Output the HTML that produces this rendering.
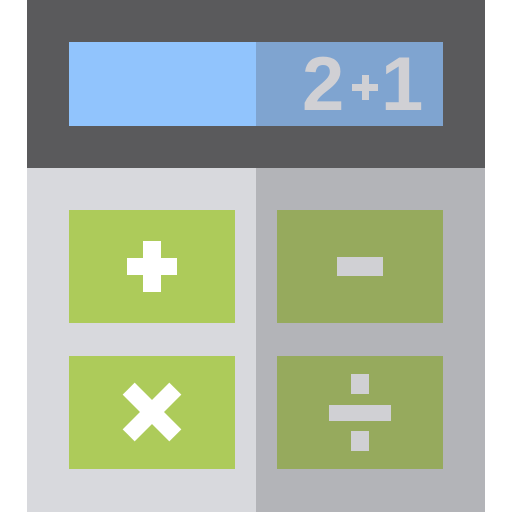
<!DOCTYPE html>
<html><head><meta charset="utf-8"><style>
html,body{margin:0;padding:0;background:#fff;width:512px;height:512px;overflow:hidden}
</style></head><body>
<svg width="512" height="512" viewBox="0 0 512 512" xmlns="http://www.w3.org/2000/svg">
<rect x="27" y="0" width="458" height="168" fill="#5a5a5c"/>
<rect x="27" y="168" width="229" height="344" fill="#d8d9dd"/>
<rect x="256" y="168" width="229" height="344" fill="#b3b4b8"/>
<rect x="69" y="42" width="187" height="84" fill="#91c4fd"/>
<rect x="256" y="42" width="187" height="84" fill="#7fa4d0"/>
<g font-family="Liberation Sans, sans-serif" font-weight="bold" fill="#d0d0d4">
<text x="302" y="110" font-size="76">2</text>
<text x="381" y="110" font-size="76">1</text>
</g>
<rect x="352" y="84" width="26" height="7" fill="#d0d0d4"/>
<rect x="362" y="75" width="7" height="25" fill="#d0d0d4"/>
<rect x="69" y="210" width="166" height="113" fill="#adcb5a"/>
<rect x="277" y="210" width="166" height="113" fill="#96aa5d"/>
<rect x="69" y="356" width="166" height="113" fill="#adcb5a"/>
<rect x="277" y="356" width="166" height="113" fill="#96aa5d"/>
<rect x="127" y="258" width="50" height="17" fill="#fff"/>
<rect x="143" y="241" width="18" height="51" fill="#fff"/>
<rect x="337" y="257" width="46" height="19" fill="#d0d0d4"/>
<rect x="351" y="374" width="18" height="20" fill="#d0d0d4"/>
<rect x="329" y="405" width="62" height="16" fill="#d0d0d4"/>
<rect x="351" y="431" width="18" height="20" fill="#d0d0d4"/>
<g transform="translate(152,412) rotate(45)" fill="#fff">
<rect x="-33" y="-8.5" width="66" height="17"/>
<rect x="-8.5" y="-33" width="17" height="66"/>
</g>
</svg>
</body></html>
